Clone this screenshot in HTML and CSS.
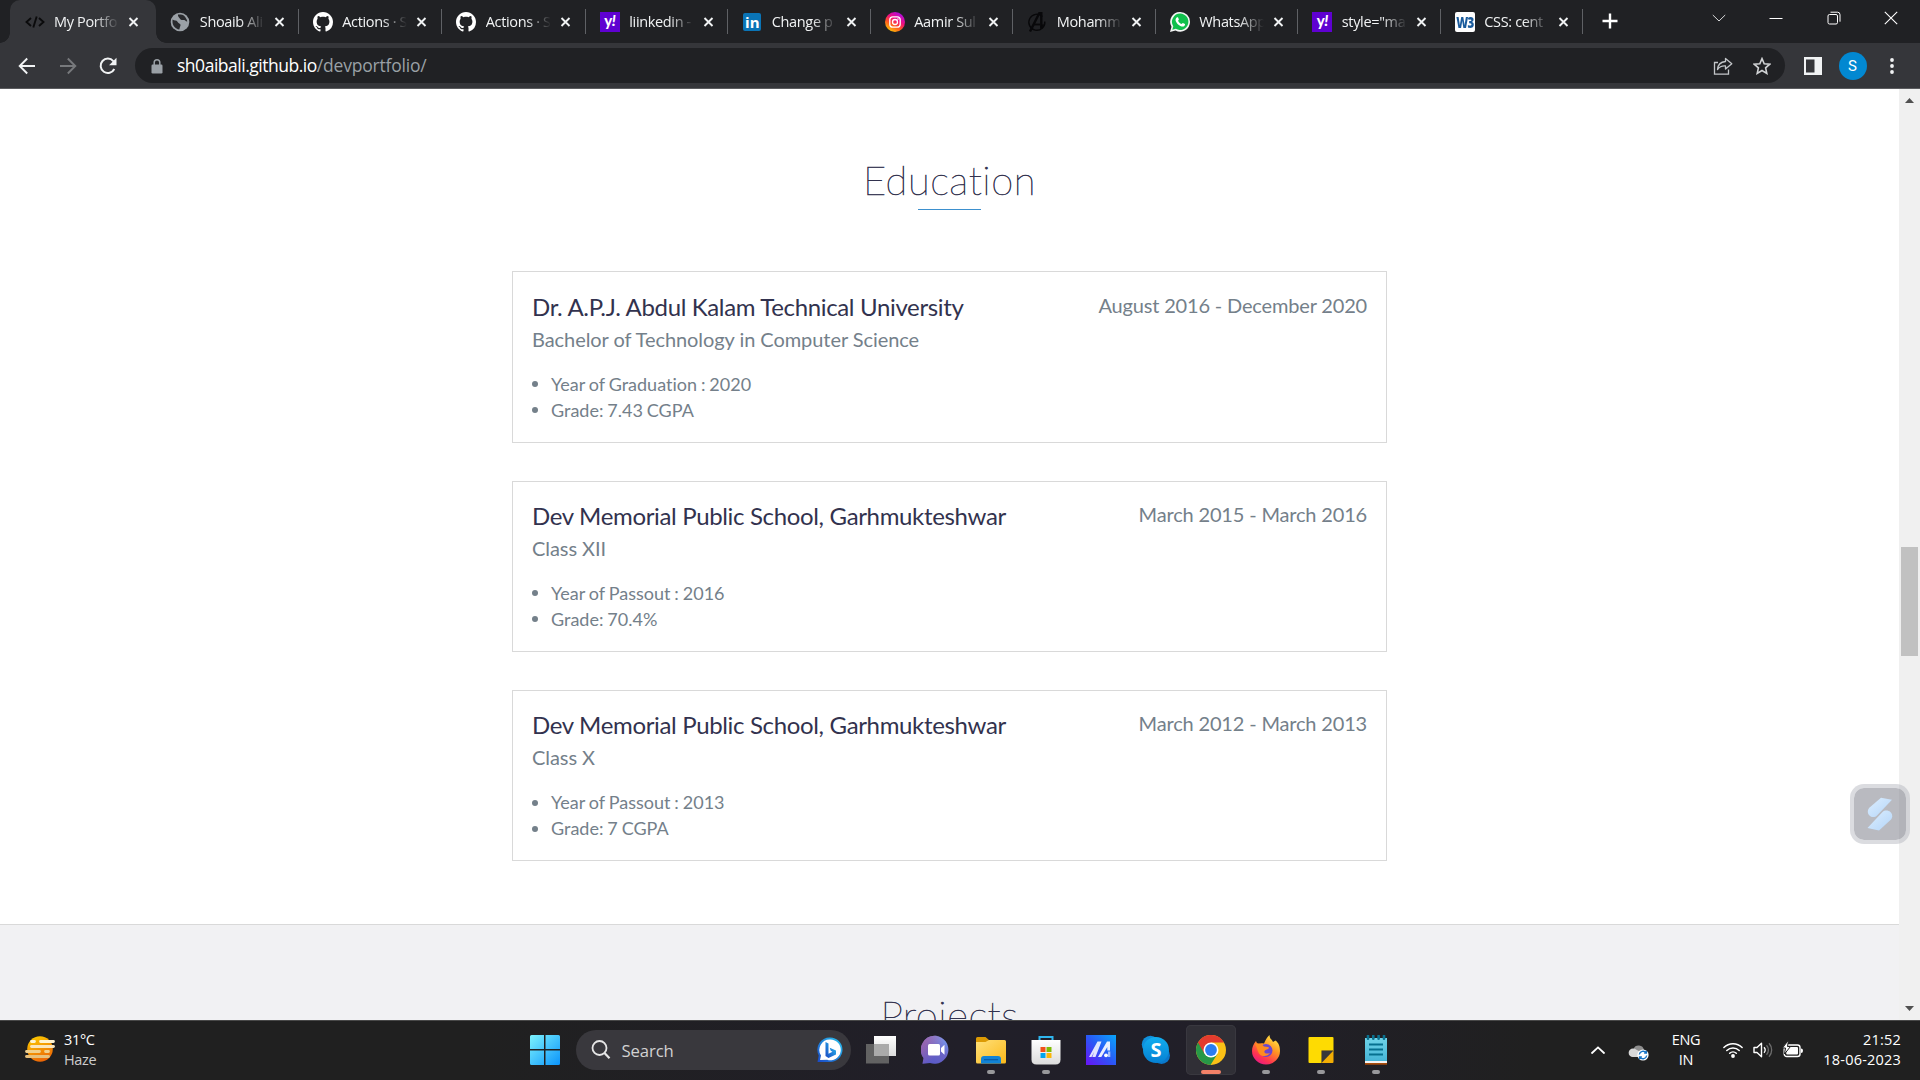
FILE: index.html
```html
<!DOCTYPE html>
<html lang="en">
<head>
<meta charset="utf-8">
<title>My Portfolio</title>
<link rel="stylesheet" href="styles.css">
</head>
<body>
<svg class="defs" width="0" height="0">
  <defs>
    <linearGradient id="ig" x1=".2" y1="1" x2=".8" y2="0"><stop offset="0" stop-color="#fdd200"/><stop offset=".35" stop-color="#ff5a1f"/><stop offset=".6" stop-color="#f0107c"/><stop offset="1" stop-color="#a30cf0"/></linearGradient>
    <linearGradient id="win" x1="0" y1="0" x2="1" y2="1"><stop offset="0" stop-color="#7df3fd"/><stop offset="1" stop-color="#0b94fb"/></linearGradient>
    <linearGradient id="sun" x1=".3" y1="0" x2=".7" y2="1"><stop offset="0" stop-color="#fcc800"/><stop offset="1" stop-color="#ea5f06"/></linearGradient>
    <linearGradient id="chat" x1=".2" y1="1" x2=".8" y2="0"><stop offset="0" stop-color="#5558c9"/><stop offset=".5" stop-color="#6a63c4"/><stop offset="1" stop-color="#7aa0f4"/></linearGradient>
    <linearGradient id="chat2" x1="0" y1="0" x2=".7" y2=".5"><stop offset="0" stop-color="#a765a8"/><stop offset="1" stop-color="#a765a8" stop-opacity="0"/></linearGradient>
    <linearGradient id="fold" x1="0" y1="0" x2="1" y2="1"><stop offset="0" stop-color="#ffe07a"/><stop offset="1" stop-color="#fbb91a"/></linearGradient>
    <linearGradient id="ma" x1="0" y1="1" x2="1" y2="0"><stop offset="0" stop-color="#6a12f5"/><stop offset=".5" stop-color="#2a58f6"/><stop offset="1" stop-color="#08a6fb"/></linearGradient>
    <linearGradient id="skype" x1="0" y1="0" x2="0" y2="1"><stop offset="0" stop-color="#12aef0"/><stop offset="1" stop-color="#0580d2"/></linearGradient>
    <linearGradient id="fox" x1=".8" y1="0" x2=".2" y2="1"><stop offset="0" stop-color="#fff04a"/><stop offset=".4" stop-color="#ff9422"/><stop offset=".75" stop-color="#ff3550"/><stop offset="1" stop-color="#e5158b"/></linearGradient>
    <linearGradient id="bing" x1="0" y1="1" x2="1" y2="0"><stop offset="0" stop-color="#1b48c4"/><stop offset="1" stop-color="#28c4f0"/></linearGradient>
    <linearGradient id="note" x1="0" y1="0" x2="0" y2="1"><stop offset="0" stop-color="#6fd3e8"/><stop offset="1" stop-color="#44b4d6"/></linearGradient>
    <linearGradient id="slash" x1="0" y1="0" x2="1" y2="1"><stop offset="0" stop-color="#dceeff"/><stop offset="1" stop-color="#b4d5f8"/></linearGradient>
    <linearGradient id="bag" x1="0" y1="0" x2="0" y2="1"><stop offset="0" stop-color="#fff"/><stop offset="1" stop-color="#dcdcdc"/></linearGradient>
    <symbol id="x" viewBox="0 0 10 10"><path d="M1 1l8 8M9 1l-8 8" stroke="#f1f3f4" stroke-width="1.9" fill="none"/></symbol>
    <symbol id="github" viewBox="0 0 16 16"><path fill="#fff" d="M8 0C3.58 0 0 3.58 0 8c0 3.54 2.29 6.53 5.47 7.59.4.07.55-.17.55-.38 0-.19-.01-.82-.01-1.49-2.01.37-2.53-.49-2.69-.94-.09-.23-.48-.94-.82-1.13-.28-.15-.68-.52-.01-.53.63-.01 1.08.58 1.23.82.72 1.21 1.87.87 2.33.66.07-.52.28-.87.51-1.07-1.78-.2-3.64-.89-3.64-3.95 0-.87.31-1.59.82-2.15-.08-.2-.36-1.02.08-2.12 0 0 .67-.21 2.2.82.64-.18 1.32-.27 2-.27s1.36.09 2 .27c1.53-1.04 2.2-.82 2.2-.82.44 1.1.16 1.92.08 2.12.51.56.82 1.27.82 2.15 0 3.07-1.87 3.75-3.65 3.95.29.25.54.73.54 1.48 0 1.07-.01 1.93-.01 2.2 0 .21.15.46.55.38A8.01 8.01 0 0 0 16 8c0-4.42-3.58-8-8-8z"/></symbol>
  </defs>
</svg>

<div class="screen">
  <header class="tabstrip">
    <div class="tab tab-active">
      <svg class="fav" viewBox="0 0 20 20"><path d="M6 6L1.500 10L6 14M14 6L18.500 10L14 14M11.700 4.500L8.300 15.500" fill="none" stroke="#0b0b0c" stroke-width="1.900"/></svg>
      <span class="tab-title">My Portfo</span><svg class="close"><use href="#x"/></svg>
    </div>
    <div class="tab">
      <svg class="fav" viewBox="0 0 20 20"><circle cx="10" cy="10" r="9.300" fill="#9aa0a6"/><path d="M2.500 7.500c2 1.500 4 .5 5 2.200s2 1.400 2.800 2.500-.6 2.600-1 5.300c-4-.6-6.800-4-6.800-7.500zM8 2.500c2 0 5.500-.2 7.200 2.500 1 1.600 2 3.200 2 4.500-1.800.3-1.700-1.800-3.400-1.500-2 .3-3.200-.2-4-1.500C9.200 5.300 7.500 4.500 8 2.500z" fill="#292a2d"/></svg>
      <span class="tab-title">Shoaib Ali</span><svg class="close"><use href="#x"/></svg>
    </div>
    <div class="tab tab-wide">
      <svg class="fav"><use href="#github"/></svg>
      <span class="tab-title">Actions · S</span><svg class="close"><use href="#x"/></svg>
    </div>
    <div class="tab tab-wide">
      <svg class="fav"><use href="#github"/></svg>
      <span class="tab-title">Actions · S</span><svg class="close"><use href="#x"/></svg>
    </div>
    <div class="tab">
      <span class="fav fav-yahoo">y<i>!</i></span>
      <span class="tab-title">liinkedin -</span><svg class="close"><use href="#x"/></svg>
    </div>
    <div class="tab">
      <span class="fav fav-in">in</span>
      <span class="tab-title">Change p</span><svg class="close"><use href="#x"/></svg>
    </div>
    <div class="tab">
      <svg class="fav" viewBox="0 0 20 20"><circle cx="10" cy="10" r="10" fill="url(#ig)"/><rect x="4.800" y="4.800" width="10.400" height="10.400" rx="3" fill="none" stroke="#fff" stroke-width="1.300"/><circle cx="10" cy="10" r="2.500" fill="none" stroke="#fff" stroke-width="1.300"/><circle cx="13" cy="7" r=".8" fill="#fff"/></svg>
      <span class="tab-title">Aamir Sul</span><svg class="close"><use href="#x"/></svg>
    </div>
    <div class="tab">
      <svg class="fav" viewBox="0 0 20 20"><g fill="none" stroke="#08080a"><path d="M15.500 4.600A8 8 0 1 0 17.800 9.500" stroke-width="1.400"/><path d="M3 19.500L12.500.8h1.800v16" stroke-width="2.400"/><path d="M7 12.500h6" stroke-width="1.800"/><path d="M14 15.500l2.500-3" stroke-width="1.600"/></g></svg>
      <span class="tab-title">Mohamm</span><svg class="close"><use href="#x"/></svg>
    </div>
    <div class="tab">
      <svg class="fav" viewBox="0 0 20 20"><path d="M10.200 0A9.800 9.800 0 0 1 20 9.800a9.800 9.800 0 0 1-14.500 8.700L0 20l1.500-5.300A9.800 9.800 0 0 1 10.200 0z" fill="#f4f6f5"/><path d="M10.200 1.600a8.200 8.200 0 1 1-4.300 15.200l-3.600 1 1-3.500A8.200 8.200 0 0 1 10.200 1.600z" fill="#10c04c"/><path d="M6.700 5.500c.5-.5 1.200-.5 1.400 0l.8 1.900c0 .5-.8 1-.8 1.400.6 1.500 1.800 2.700 3.400 3.300.5 0 .9-1.100 1.400-1l2 1c.3.500 0 1.600-.6 2-1.200.8-2.400.6-4-.1-2.100-1-3.700-2.700-4.600-4.900-.4-1.400.1-2.800 1-3.600z" fill="#fff"/></svg>
      <span class="tab-title">WhatsApp</span><svg class="close"><use href="#x"/></svg>
    </div>
    <div class="tab">
      <span class="fav fav-yahoo">y<i>!</i></span>
      <span class="tab-title">style="ma</span><svg class="close"><use href="#x"/></svg>
    </div>
    <div class="tab">
      <span class="fav fav-w3"><b>W3</b></span>
      <span class="tab-title">CSS: cent</span><svg class="close"><use href="#x"/></svg>
    </div>
    <svg class="newtab" viewBox="0 0 16 16"><path d="M8 .5v15M.5 8h15" stroke="#fff" stroke-width="2.400"/></svg>
    <div class="wincontrols">
      <svg viewBox="0 0 14 14"><path d="M.8 4l6.200 6 6.200-6" fill="none" stroke="#d8d9da" stroke-width="1"/></svg>
      <svg viewBox="0 0 14 14"><path d="M.5 7.500h13" stroke="#fff"/></svg>
      <svg viewBox="0 0 14 14"><rect x="1" y="3.500" width="9.500" height="9.500" rx="1.500" fill="none" stroke="#fff"/><path d="M3.500 1.200h7a2.500 2.500 0 0 1 2.500 2.500v7" fill="none" stroke="#fff"/></svg>
      <svg viewBox="0 0 14 14"><path d="M.8 .8l12.400 12.400M13.200 .8L.8 13.200" stroke="#fff" stroke-width="1.100"/></svg>
    </div>
  </header>

  <div class="toolbar">
    <nav class="navbuttons">
      <svg viewBox="0 0 18 18"><path d="M17 9H2M9.200 1.500L1.700 9l7.500 7.500" fill="none" stroke="#f1f3f4" stroke-width="1.900"/></svg>
      <svg viewBox="0 0 18 18"><path d="M1 9h15M8.800 1.500L16.300 9l-7.500 7.500" fill="none" stroke="#77797c" stroke-width="1.900"/></svg>
      <svg viewBox="0 0 18 18"><path d="M15.300 12A7.200 7.200 0 1 1 14.300 4.100L16 5.800" fill="none" stroke="#f1f3f4" stroke-width="2"/><path d="M17.500.8v7.400h-7.400z" fill="#f1f3f4"/></svg>
    </nav>
    <div class="omnibox">
      <svg class="lock" viewBox="0 0 12 15"><rect x=".5" y="5.500" width="11" height="9" rx="1.200" fill="#9aa0a6"/><path d="M3.200 6V3.600a2.800 2.800 0 0 1 5.600 0V6" fill="none" stroke="#9aa0a6" stroke-width="1.500"/></svg>
      <span class="url">sh0aibali.github.io<span class="path">/devportfolio/</span></span>
      <svg class="share" viewBox="0 0 20 18"><path d="M5 5.500H1.500v11.700h14V12.500" fill="none" stroke="#c3c6c9" stroke-width="1.300"/><path d="M12.500 1.500l6.300 5.300-6.300 5.300V9c-3.500-.3-6 .8-8 3.500.3-4.500 3-7.500 8-8z" fill="none" stroke="#c3c6c9" stroke-width="1.300" stroke-linejoin="round"/></svg>
      <svg class="star" viewBox="0 0 18 18"><path d="M9 1.600l2.200 5.100 5.600.5-4.200 3.700 1.200 5.500L9 13.500l-4.800 2.900 1.200-5.500L1.200 7.200l5.600-.5z" fill="none" stroke="#d0d2d4" stroke-width="1.600"/></svg>
    </div>
    <svg class="panel" viewBox="0 0 18 18"><rect width="18" height="18" fill="#f1f3f4"/><rect x="2" y="2.500" width="8.500" height="13" fill="#35363a"/></svg>
    <span class="avatar">S</span>
    <svg class="kebab" viewBox="0 0 4 18"><circle cx="2" cy="3" r="1.900" fill="#f1f3f4"/><circle cx="2" cy="9" r="1.900" fill="#f1f3f4"/><circle cx="2" cy="15" r="1.900" fill="#f1f3f4"/></svg>
  </div>

  <div class="viewport">
    <main class="page">
      <section class="education">
        <h2 class="heading">Education</h2>
        <div class="cards">
          <article class="card">
            <div class="card-head"><h3>Dr. A.P.J. Abdul Kalam Technical University</h3><span class="date">August 2016 - December 2020</span></div>
            <h4>Bachelor of Technology in Computer Science</h4>
            <ul><li>Year of Graduation : 2020</li><li>Grade: 7.43 CGPA</li></ul>
          </article>
          <article class="card">
            <div class="card-head"><h3>Dev Memorial Public School, Garhmukteshwar</h3><span class="date">March 2015 - March 2016</span></div>
            <h4>Class XII</h4>
            <ul><li>Year of Passout : 2016</li><li>Grade: 70.4%</li></ul>
          </article>
          <article class="card">
            <div class="card-head"><h3>Dev Memorial Public School, Garhmukteshwar</h3><span class="date">March 2012 - March 2013</span></div>
            <h4>Class X</h4>
            <ul><li>Year of Passout : 2013</li><li>Grade: 7 CGPA</li></ul>
          </article>
        </div>
      </section>
      <section class="projects"><h2 class="heading">Projects</h2></section>
    </main>
    <div class="scrollbar">
      <svg viewBox="0 0 9 5"><path d="M0 5L4.500 0 9 5z" fill="#505050"/></svg>
      <div class="thumb"></div>
      <svg class="down" viewBox="0 0 9 5"><path d="M0 0l4.500 5L9 0z" fill="#505050"/></svg>
    </div>
    <div class="widget">
      <svg viewBox="0 0 26 34"><path d="M14 .8L25 2.800 10 18.500C7 21.500.8 20 .8 14.500c0-1.500.6-2.700 1.800-4z" fill="url(#slash)"/><path d="M12 33.500L.5 31 15.500 15c3.500-3 9.700-1 9.700 4.200 0 1.500-.6 2.700-1.700 3.800z" fill="url(#slash)"/></svg>
    </div>
  </div>

  <footer class="taskbar">
    <div class="weather">
      <svg viewBox="0 0 30 26"><circle cx="15" cy="13" r="12.800" fill="url(#sun)"/><g stroke-width="2.800" stroke-linecap="round"><path d="M6.500 5.500h3M15.500 5.500h13" stroke="#fff3d0"/><path d="M6.500 10.500h22" stroke="#fbe6bb"/><path d="M1.500 15.500h13M20.500 15.500h3" stroke="#f1d08c"/><path d="M1.500 20.500h22" stroke="#e8c07b"/></g></svg>
      <p>31°C<br><span>Haze</span></p>
    </div>
    <div class="apps">
      <div class="app"><svg viewBox="0 0 30 30"><path d="M1.500 0H14v14H0V1.500Q0 0 1.500 0zM15.500 0h13Q30 0 30 1.500V14H15.500zM0 15.500h14V30H1.500Q0 30 0 28.500zM15.500 15.500H30v13q0 1.500-1.500 1.500h-13z" fill="url(#win)"/></svg></div>
      <div class="search">
        <svg class="glass" viewBox="0 0 20 20"><circle cx="8.500" cy="8" r="7" fill="none" stroke="#e6e6e6" stroke-width="1.800"/><path d="M13.500 13l5 5.300" stroke="#e6e6e6" stroke-width="2.200"/></svg>
        <span>Search</span>
        <svg class="bing" viewBox="0 0 26 26"><path d="M13 .5A12.300 12.300 0 0 1 25.500 12.800 12.300 12.300 0 0 1 13 25H.5l1.200-6.500A12.300 12.300 0 0 1 13 .5z" fill="url(#bing)"/><path d="M13.200 2.500a10.400 10.400 0 1 1-3 20.300L3 23l1-4.500a10.400 10.400 0 0 1 9.200-16z" fill="#fff"/><path d="M8.500 5l3 1.500v10.200l4-2-1.800-1-1-3 6.300 2.700v4L11.500 21l-3-2z" fill="url(#bing)"/></svg>
      </div>
      <div class="app"><svg viewBox="0 0 30 30"><rect x="8" y="1" width="22" height="20" fill="url(#bag)"/><rect y="9" width="23" height="19.500" fill="#696969" opacity=".9"/><rect x="8" y="9" width="15" height="12" fill="#aaa"/></svg></div>
      <div class="app"><svg viewBox="0 0 30 30"><path d="M15 .8A14 14 0 1 1 9 28l-7.500.7L2.500 23A14 14 0 0 1 15 .8z" fill="url(#chat)"/><path d="M15 .8A14 14 0 1 1 9 28l-7.500.7L2.500 23A14 14 0 0 1 15 .8z" fill="url(#chat2)"/><rect x="7" y="9" width="12" height="11.500" rx="1.500" fill="#fff"/><path d="M20 13l3.500-3.200v10L20 16.500z" fill="#fff"/></svg></div>
      <div class="app running"><svg viewBox="0 0 30 30"><path d="M0 3.500Q0 2 1.500 2h8L13 5h8v8H0z" fill="#dc9a04"/><path d="M0 7h9.500L13 5h15.500Q30 5 30 6.500V27q0 1.500-1.500 1.500h-27Q0 28.500 0 27z" fill="url(#fold)"/><path d="M5 28.500V24q0-3 3-3h14q3 0 3 3v4.500z" fill="#1183d6"/><path d="M8 24.700h14" stroke="#0a5aa5" stroke-width="1.200"/></svg></div>
      <div class="app running"><svg viewBox="0 0 30 30"><path d="M8.500 7V2h13v5" fill="none" stroke="#2fb6ee" stroke-width="2"/><path d="M.5 5h29v19.500q0 5-5 5h-19q-5 0-5-5z" fill="url(#bag)"/><path d="M9.500 12H14.500v5h-5z" fill="#f1511b"/><path d="M15.500 12h5v5h-5z" fill="#80bc06"/><path d="M9.500 18h5v5h-5z" fill="#00a4ef"/><path d="M15.500 18h5v5h-5z" fill="#fbb60a"/></svg></div>
      <div class="app"><svg viewBox="0 0 30 30"><rect width="30" height="30" fill="url(#ma)"/><path d="M3 22L11.500 6.500h4L9.500 22H6.300l1.800-5L5.500 22z" fill="#fff" opacity=".85"/><path d="M12 22L21 6.500h3V15.500h-2.700V12L15.300 22z" fill="#fff" opacity=".9"/><circle cx="20" cy="20.300" r="1.900" fill="#fff"/><path d="M22 16.500h2.300V22H22z" fill="#fff" opacity=".6"/></svg></div>
      <div class="app"><span class="skype-wrap"><svg viewBox="0 0 30 30"><circle cx="9.500" cy="9.500" r="8.700" fill="#1090dc"/><circle cx="20.500" cy="20.500" r="8.500" fill="#0a78cc"/><circle cx="15" cy="15" r="13" fill="url(#skype)"/></svg><b>S</b></span></div>
      <div class="app running current"><svg viewBox="0 0 30 30"><circle cx="15" cy="15" r="15" fill="#fbc116"/><path d="M15 15L2 7.500A15 15 0 0 0 14.500 30L21.500 18.700z" fill="#279847"/><path d="M15 15v-7.500h13A15 15 0 0 0 2 7.500l6.500 11.200z" fill="#e33b2e"/><circle cx="15" cy="15" r="7.500" fill="#fff"/><circle cx="15" cy="15" r="5.900" fill="#2c7df0"/></svg></div>
      <div class="app running"><svg viewBox="0 0 30 30"><path d="M5 6c.5 1.500 1 2 2 2.700C9 8 11 8 13 8.500c1.500-3.500 3-6.500 5.500-8.500 0 3.500 2 4.200 3.500 7l2.500-1.500C28 8 29 12 29 16A14 13.500 0 0 1 1 16C1 12 2.500 9 5 6z" fill="url(#fox)"/><circle cx="15" cy="15.500" r="6.500" fill="#6b46cf"/><path d="M4 9c3-1.200 7-.2 9 2.500 3 .2 5 .5 5 1.500-1 1.500-3.500 1.500-4.500 3-1 2 2 3.500 5.500 2-2 4-9 4-11 .5C6 15 6 12 4 9z" fill="#ff8b1f"/></svg></div>
      <div class="app running"><svg viewBox="0 0 30 30"><path d="M3.500 2h23q1 0 1 1v12.500L15.500 28h-12q-1 0-1-1V3q0-1 1-1z" fill="#fedb02"/><path d="M15.500 28V15.500h12V27q0 1-1 1z" fill="#f3ae04"/><path d="M15.500 28V15.500h12z" fill="#37373b"/></svg></div>
      <div class="app running"><svg viewBox="0 0 30 30"><path d="M4 3h22v24H4z" fill="url(#note)"/><path d="M4 26h22v2H4z" fill="#f3f3f3"/><path d="M4 28h22v1.700H4z" fill="#a94d0c"/><path d="M8 9.500h14M8 14.500h14M8 19.500h14" stroke="#06708f" stroke-width="1.800"/><path d="M7 .8v3M12.300 .8v3M17.600 .8v3M23 .8v3" stroke="#0a718f" stroke-width="2.600" stroke-linecap="round"/></svg></div>
    </div>
    <div class="tray">
      <svg class="chev" viewBox="0 0 14 8"><path d="M1 7l6-5.600L13 7" fill="none" stroke="#fff" stroke-width="1.800" stroke-linecap="round"/></svg>
      <svg class="cloud" viewBox="0 0 20 18"><path d="M5 6a5.500 5.500 0 0 1 10.500 1A4 4 0 0 1 17 12H5z" fill="#8f8f8f"/><path d="M4.500 5.500c3 0 4 2 6.500 3v5.500H4.300a4.200 4.200 0 0 1 .2-8.500z" fill="#d8d8d8"/><circle cx="14.500" cy="12" r="5.600" fill="#fff"/><path d="M10.800 11.500a3.800 3.800 0 0 1 6.800-1.700M18.200 12.500a3.800 3.800 0 0 1-6.800 1.700M17.900 7.800v2.300h-2.300M11.100 16.200v-2.300h2.300" fill="none" stroke="#1673c5" stroke-width="1.400"/></svg>
      <p class="lang">ENG<br>IN</p>
      <svg class="wifi" viewBox="0 0 20 16"><g fill="none" stroke="#fff" stroke-width="1.500" stroke-linecap="round"><path d="M.9 5.500a13 13 0 0 1 18.200 0M3.800 8.500a8.800 8.800 0 0 1 12.400 0M6.700 11.300a4.700 4.700 0 0 1 6.600 0"/></g><circle cx="10" cy="14" r="1.900" fill="#fff"/></svg>
      <svg class="sound" viewBox="0 0 20 16"><path d="M1 5.500h3L8.500 1.300v13.400L4 10.500H1z" fill="none" stroke="#fff" stroke-width="1.400" stroke-linejoin="round"/><path d="M11 5.300a4 4 0 0 1 0 5.400" fill="none" stroke="#fff" stroke-width="1.300"/><path d="M13.500 3.200a7 7 0 0 1 0 9.600M16 1.200a10 10 0 0 1 0 13.600" fill="none" stroke="#6c6c6c" stroke-width="1.300"/></svg>
      <svg class="battery" viewBox="0 0 20 17"><rect x="1.200" y="4" width="15.800" height="11.500" rx="2.500" fill="none" stroke="#fff" stroke-width="1.400"/><rect x="3.200" y="6" width="11.800" height="7.500" rx="1" fill="#fff"/><path d="M18 7.500q2 0 2 2.200t-2 2.200z" fill="#fff"/><path d="M5.500 -1L-.5 7h3L1.500 13 7.500 5.500H4.500z" fill="#fff" stroke="#202020" stroke-width="1"/></svg>
      <p class="clock">21:52<br>18-06-2023</p>
    </div>
  </footer>
</div>
</body>
</html>
```
FILE: styles.css
```css
* { box-sizing: border-box; margin: 0; padding: 0; }
body { width: 1920px; height: 1080px; overflow: hidden; font-family: "Open Sans", "Noto Sans", sans-serif; }
svg { display: block; flex: none; }
.defs { position: absolute; }
.screen { display: grid; grid-template-rows: 43px 46px 931px 60px; height: 1080px; background: #202124; }

/* Tab strip */
.tabstrip { display: flex; padding-left: 10px; background: #202124; }
.tab { display: flex; align-items: center; position: relative; flex: none; width: 142.500px; padding-left: 14px; }
.tab::after { content: ""; width: 1px; height: 25px; margin-left: auto; background: #5f6165; }
.tab-wide { width: 143.500px; }
.tab-active { width: 146.300px; padding-left: 14.500px; background: #35363a; border-radius: 10px 10px 0 0; }
.tab-active::after { position: absolute; right: -10px; bottom: 0; width: 10px; height: 10px; background: radial-gradient(circle at 100% 0, transparent 9.5px, #35363a 10px); }
.tab-active::before { content: ""; position: absolute; left: -10px; bottom: 0; width: 10px; height: 10px; background: radial-gradient(circle at 0 0, transparent 9.500px, #35363a 10px); }
.fav { width: 20px; height: 20px; flex: none; }
.tab-title { width: 69px; margin-left: 9.500px; font-size: 14.500px; line-height: 20px; letter-spacing: -.35px; color: #f1f3f4; white-space: nowrap; -webkit-mask-image: linear-gradient(90deg, #000 40px, transparent 65px); mask-image: linear-gradient(90deg, #000 40px, transparent 65px); }
.close { width: 11px; height: 10px; margin-left: 5px; }
.fav-yahoo { background: #5f01d1; color: #fff; font: 900 15px/17px Lato, sans-serif; text-align: center; letter-spacing: -.5px; }
.fav-in { width: 18px; height: 18px; margin: 0 1px; border-radius: 2px; background: #0a74b6; color: #fff; font: bold 15px/18px "Open Sans", sans-serif; text-align: center; }
.fav-w3 { display: grid; justify-content: center; border-radius: 2px; background: #fff; color: #1a5b9c; font: bold 16px/20px "Open Sans", sans-serif; letter-spacing: -1px; }
.fav-w3 b { transform: scaleX(.72); }
.newtab { width: 16px; height: 16px; margin: 13px 0 0 19px; }
.wincontrols { display: flex; gap: 43.500px; margin: 11px 22px 0 auto; }
.wincontrols svg { width: 14px; height: 14px; }

/* Toolbar */
.toolbar { display: flex; align-items: center; background: #35363a; border-bottom: 1px solid #5b5c5f; }
.navbuttons { display: flex; gap: 22.500px; padding-left: 18px; width: 135px; }
.navbuttons svg { width: 18px; height: 18px; }
.omnibox { display: flex; align-items: center; width: 1650px; height: 35px; border-radius: 18px; background: #202124; }
.lock { width: 12px; height: 15px; margin: 2px 0 0 16px; }
.url { margin: -1px 0 0 14px; font-size: 17.500px; letter-spacing: -.48px; color: #fff; }
.path { letter-spacing: -.2px; color: #9aa0a6; }
.share { width: 20px; height: 18px; margin-left: auto; }
.star { width: 18px; height: 18px; margin: 0 14px 0 20px; }
.panel { width: 18px; height: 18px; margin-left: 18.500px; }
.avatar { width: 28px; height: 28px; margin-left: 17px; border-radius: 50%; background: #0288d1; color: #fff; font: 15px/28px Roboto, sans-serif; text-align: center; }
.kebab { width: 4px; height: 18px; margin-left: 23.500px; }

/* Page */
.viewport { display: grid; grid-template-columns: 1899px 21px; position: relative; overflow: hidden; }
.page { font-family: Lato, sans-serif; font-variant-ligatures: none; background: #fff; overflow: hidden; color: #74808a; }
.education { height: 836px; padding-top: 67px; border-bottom: 1px solid #d9d9d9; }
.heading { display: flex; flex-direction: column; align-items: center; font-size: 40px; line-height: 48px; font-weight: 100; letter-spacing: .55px; color: #32324e; -webkit-text-stroke: .6px #32324e; }
.heading::after { content: ""; width: 63px; height: 1px; margin-top: 5px; background: #3d90ce; }
.cards { display: grid; gap: 38px; width: 875px; margin: 61.400px 0 0 512px; }
.card { height: 171.200px; padding: 18.600px 19px 0; border: 1px solid #d9d9d9; }
.card-head { display: flex; justify-content: space-between; }
.card h3 { font-size: 24px; line-height: 32px; font-weight: 400; letter-spacing: -.34px; color: #32324e; }
.date { font-size: 20px; line-height: 28px; letter-spacing: -.17px; }
.card h4 { font-size: 20px; line-height: 32px; font-weight: 400; letter-spacing: -.06px; }
.card ul { margin-top: 15.700px; padding-left: 19px; list-style: none; font-size: 18px; line-height: 26px; word-spacing: -.7px; }
.card li { display: flex; align-items: center; }
.card li::before { content: ""; width: 6px; height: 6px; margin: 1px 13px 0 -19px; border-radius: 50%; background: #74808a; }
.projects { height: 200px; padding-top: 66px; background: #f1f1f3; }

.scrollbar { display: flex; flex-direction: column; align-items: center; padding: 9px 0; background: #f0f0f0; }
.scrollbar svg { width: 9px; height: 5px; }
.thumb { width: 17px; height: 109px; margin-top: 444px; background: #c1c1c1; }
.scrollbar .down { margin-top: auto; }
.widget { position: absolute; left: 1850px; top: 695px; display: grid; place-items: center; width: 60px; height: 60px; border: 4px solid rgba(175, 177, 186, .45); border-radius: 14px; background: rgba(115, 117, 130, .5); background-clip: padding-box; }
.widget svg { width: 26px; height: 34px; }

/* Taskbar */
.taskbar { display: grid; grid-template-columns: 520px 881px 519px; border-top: 1px solid #484848; background: linear-gradient(90deg, #202020 25%, #211f29 50%, #211f28 65%, #202020 80%); color: #fff; font-size: 14.500px; line-height: 20px; }
.weather { display: flex; gap: 9px; padding: 9px 0 0 25px; letter-spacing: -.35px; }
.weather svg { width: 30px; height: 26px; margin-top: 6px; }
.weather span { color: #ccc; }
.apps { display: flex; gap: 5px; padding-top: 4px; }
.app { display: grid; place-items: center; position: relative; flex: none; width: 50px; height: 50px; border-radius: 5px; }
.app svg { width: 30px; height: 30px; }
.running::after { content: ""; position: absolute; bottom: 1px; left: 21px; width: 8px; height: 4px; border-radius: 2px; background: #98989b; }
.current { background: #302f36; box-shadow: inset 0 0 0 1px #39383f; }
.current::after { left: 15px; width: 20px; background: #f28168; }
.search { display: flex; align-items: center; flex: none; width: 275px; height: 40px; margin: 5px 0 0 1px; padding: 0 8px 0 14.500px; border-radius: 20px; background: #39383d; }
.search span { margin: 1px 0 0 11px; font-size: 16.700px; letter-spacing: -.1px; color: #d2d2d2; }
.glass { width: 20px; height: 20px; }
.bing { width: 26px; height: 26px; margin-left: auto; }
.skype-wrap { display: grid; place-items: center; }
.skype-wrap svg, .skype-wrap b { grid-area: 1 / 1; }
.skype-wrap b { z-index: 1; font-size: 20px; line-height: 28px; }
.tray { display: flex; align-items: center; padding: 0 19px 2px 190px; }
.tray p { letter-spacing: -.3px; }
.tray .chev { width: 14px; height: 8px; }
.cloud { width: 21px; height: 18px; margin: 5px 0 0 22.500px; }
.tray .lang { width: 34px; margin: 1px 0 0 20.500px; text-align: center; }
.wifi { width: 20px; height: 16px; margin-left: 20px; }
.sound { width: 20px; height: 16px; margin-left: 10px; }
.battery { width: 20px; height: 17px; margin-left: 10px; overflow: visible; }
.tray .clock { margin-left: auto; letter-spacing: .2px; text-align: right; }
```
